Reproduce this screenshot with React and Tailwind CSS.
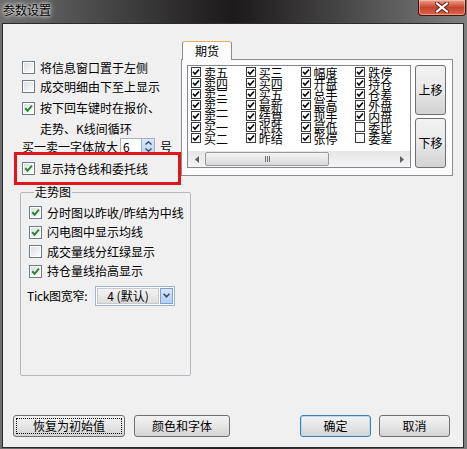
import React from 'react';

// ============================================
// 参数设置 - Win7 style settings dialog
// ============================================

const font = "font-['Noto_Sans_CJK_SC','Liberation_Sans',sans-serif]";

// Win7 themed checkbox (13px)
function Check({ checked }) {
  return (
    <span className="w-[13px] h-[13px] shrink-0 border border-[#6f7b88] bg-white p-[1px] flex">
      <span className="flex-1 flex items-center justify-center bg-gradient-to-br from-[#dcdfe3] to-[#fbfbfb]">
        {checked && (
          <svg width="9" height="9" viewBox="0 0 9 9">
            <path d="M1.2 4.3 L3.6 6.8 L7.9 1.6" stroke="#2a8a2a" strokeWidth="2" fill="none" />
          </svg>
        )}
      </span>
    </span>
  );
}

// Classic flat checkbox used inside the list
function ListCheck({ checked }) {
  return (
    <span className="w-[10px] h-[10px] shrink-0 border border-[#3a3a3a] bg-white flex items-center justify-center">
      {checked && (
        <svg width="8" height="8" viewBox="0 0 8 8">
          <path d="M1 3.8 L3 6 L7 1.5" stroke="#000" strokeWidth="1.7" fill="none" />
        </svg>
      )}
    </span>
  );
}

function Button({ children, className = '', focused = false, primary = false }) {
  return (
    <button
      className={`h-[22px] rounded-[3px] border ${
        primary ? 'border-[#3c7fb1] shadow-[inset_0_0_0_1px_#b6dcf5]' : 'border-[#707070]'
      } bg-gradient-to-b from-[#f2f2f2] via-[#e6e6e6] to-[#d4d4d4] text-[12px] leading-none text-black flex items-center justify-center p-[2px] ${className}`}
    >
      <span
        className={`w-full h-full flex items-center justify-center ${
          focused ? 'border border-dotted border-black' : ''
        }`}
      >
        {children}
      </span>
    </button>
  );
}

const columns = [
  [['卖五', 1], ['卖四', 1], ['卖三', 1], ['卖二', 1], ['卖一', 1], ['买一', 1], ['买二', 1]],
  [['买三', 1], ['买四', 1], ['买五', 1], ['最新', 1], ['结算', 1], ['张跌', 1], ['昨结', 1]],
  [['幅度', 1], ['开盘', 1], ['总手', 1], ['最高', 1], ['现手', 1], ['最低', 1], ['张停', 1]],
  [['跌停', 1], ['持仓', 1], ['仓差', 1], ['外盘', 1], ['内盘', 1], ['委比', 0], ['委差', 0]],
];

function TitleBar() {
  return (
    <div className="h-[23px] flex items-start justify-between shrink-0">
      <span className="pl-[3px] pt-[3px] text-[12px] leading-[13px] text-black [text-shadow:0_0_6px_#ffffff,0_0_3px_#ffffff]">
        参数设置
      </span>
      <button className="mr-[1px] w-[48px] h-[16px] rounded-b-[4px] border border-t-0 border-[#4a1208] bg-gradient-to-b from-[#e9a08c] via-[#c7412c] to-[#d9664a] shadow-[inset_0_0_0_1px_rgba(255,210,190,0.5)] flex items-center justify-center">
        <svg width="14" height="11" viewBox="0 0 14 11">
          <path d="M2 1.5 L12 9.5 M12 1.5 L2 9.5" stroke="#5a1a10" strokeWidth="4" strokeLinecap="square" />
          <path d="M2 1.5 L12 9.5 M12 1.5 L2 9.5" stroke="#ffffff" strokeWidth="2.2" strokeLinecap="square" />
        </svg>
      </button>
    </div>
  );
}

function LeftOptions() {
  return (
    <div className="w-[178px] shrink-0 flex flex-col pt-[37px]">
      <div className="flex items-center h-[13px] pl-[19px] gap-[5px]">
        <Check />
        <span className="leading-[13px] whitespace-nowrap">将信息窗口置于左侧</span>
      </div>
      <div className="flex items-center h-[13px] pl-[19px] gap-[5px] mt-[6px]">
        <Check />
        <span className="leading-[13px] whitespace-nowrap">成交明细由下至上显示</span>
      </div>
      <div className="flex items-start h-[41px] pl-[19px] gap-[5px] mt-[4px]">
        <span className="mt-[5px]">
          <Check checked />
        </span>
        <span className="leading-[21px] whitespace-nowrap">
          按下回车键时在报价、
          <br />
          走势、K线间循环
        </span>
      </div>
      <div className="flex items-center h-[17px] pl-[19px]">
        <span className="whitespace-nowrap">买一卖一字体放大</span>
        <div className="ml-[2px] w-[35px] h-[17px] border border-[#abadb3] bg-white flex">
          <span className="flex-1 pl-[2px] leading-[15px]">6</span>
          <div className="w-[13px] flex flex-col border-l border-[#8fb2dd] bg-gradient-to-b from-[#dbe8f7] to-[#bfd4ef]">
            <span className="flex-1 flex items-center justify-center">
              <svg width="7" height="4" viewBox="0 0 7 4">
                <path d="M0.5 3.5 L3.5 0.8 L6.5 3.5" stroke="#2b4d7e" strokeWidth="1.4" fill="none" />
              </svg>
            </span>
            <span className="flex-1 flex items-center justify-center">
              <svg width="7" height="4" viewBox="0 0 7 4">
                <path d="M0.5 0.5 L3.5 3.2 L6.5 0.5" stroke="#2b4d7e" strokeWidth="1.4" fill="none" />
              </svg>
            </span>
          </div>
        </div>
        <span className="ml-[5px]">号</span>
      </div>
      <div className="ml-[11px] mt-[-3px] w-[167px] h-[33px] border-[3px] border-[#e0161b] flex items-center pl-[5px] gap-[5px]">
        <Check checked />
        <span className="whitespace-nowrap">显示持仓线和委托线</span>
      </div>
    </div>
  );
}

function FuturesTab() {
  return (
    <div className="flex flex-col pt-[17px]">
      <div className="flex">
        <div className="ml-[1px] w-[50px] h-[19px] -mb-[1px] z-10 rounded-t-[3px] border border-b-0 border-[#898c95] border-t-[#e3b15e] bg-[#fcfcfc] flex items-center justify-center leading-none">
          期货
        </div>
      </div>
      <div className="w-[272px] h-[117px] border border-[#898c95] bg-[#fcfcfc] flex pl-[5px] pt-[5px]">
        <div className="w-[224px] h-[103px] border border-[#828790] bg-white flex flex-col">
          <div className="flex pt-[1px] pl-[3px]">
            {columns.map((col, ci) => (
              <div key={ci} className="w-[56px] flex flex-col">
                {col.map(([label, on]) => (
                  <div key={label} className="h-[11px] flex items-start gap-[3px]">
                    <ListCheck checked={!!on} />
                    <span className="text-[12px] leading-[11px] whitespace-nowrap">{label}</span>
                  </div>
                ))}
              </div>
            ))}
          </div>
          {/* horizontal scrollbar */}
          <div className="mt-auto h-[16px] flex bg-gradient-to-b from-[#e6e6e6] to-[#f4f4f4]">
            <span className="w-[17px] flex items-center justify-center">
              <svg width="4" height="7" viewBox="0 0 4 7">
                <path d="M4 0 L0 3.5 L4 7 Z" fill="#606060" />
              </svg>
            </span>
            <div className="w-[124px] my-[1px] rounded-[2px] border border-[#9a9a9a] bg-gradient-to-b from-[#f4f4f4] to-[#d9d9d9] flex items-center justify-center gap-[1px]">
              <span className="w-[1px] h-[6px] bg-[#707070]" />
              <span className="w-[1px] h-[6px] bg-[#707070]" />
              <span className="w-[1px] h-[6px] bg-[#707070]" />
            </div>
            <span className="flex-1" />
            <span className="w-[17px] flex items-center justify-center">
              <svg width="4" height="7" viewBox="0 0 4 7">
                <path d="M0 0 L4 3.5 L0 7 Z" fill="#606060" />
              </svg>
            </span>
          </div>
        </div>
        <div className="ml-[4px] flex flex-col gap-[3px]">
          <button className="w-[31px] h-[50px] rounded-[3px] border border-[#707070] bg-gradient-to-b from-[#f2f2f2] via-[#e8e8e8] to-[#d2d2d2] text-[12px] leading-none">
            上移
          </button>
          <button className="w-[31px] h-[50px] rounded-[3px] border border-[#707070] bg-gradient-to-b from-[#f2f2f2] via-[#e8e8e8] to-[#d2d2d2] text-[12px] leading-none">
            下移
          </button>
        </div>
      </div>
    </div>
  );
}

function TrendGroup() {
  const items = [
    ['分时图以昨收/昨结为中线', true],
    ['闪电图中显示均线', true],
    ['成交量线分红绿显示', false],
    ['持仓量线抬高显示', true],
  ];
  return (
    <fieldset className="ml-[17px] mt-[1px] w-[171px] h-[190px] border border-[#b5b9bd] rounded-[2px] pl-[8px]">
      <legend className="ml-[5px] px-[1px] leading-[12px]">走势图</legend>
      <div className="flex flex-col pt-[8px]">
        {items.map(([label, on], i) => (
          <div key={label} className={`flex items-center h-[13px] gap-[5px] ${i ? 'mt-[6.5px]' : ''}`}>
            <Check checked={on} />
            <span className="whitespace-nowrap">{label}</span>
          </div>
        ))}
        <div className="flex items-center mt-[8px] -ml-[2px]">
          <span className="w-[68px] whitespace-nowrap tracking-[-0.3px]">Tick图宽窄:</span>
          <div className="w-[80px] h-[20px] border border-[#9fb4d3] bg-white flex p-[1px]">
            <span className="flex-1 mr-[1px] border border-[#c9c9c9] bg-gradient-to-b from-[#f4f4f4] to-[#dddddd] flex items-center justify-center leading-none">
              4 (默认)
            </span>
            <span className="w-[13px] border border-[#7ba2d6] bg-gradient-to-b from-[#d7e5f6] to-[#b9d0ee] flex items-center justify-center">
              <svg width="7" height="5" viewBox="0 0 7 5">
                <path d="M0.6 0.8 L3.5 3.8 L6.4 0.8" stroke="#2b4d7e" strokeWidth="1.6" fill="none" />
              </svg>
            </span>
          </div>
        </div>
      </div>
    </fieldset>
  );
}

export default function App() {
  return (
    <div
      className={`w-[467px] h-[449px] flex flex-col overflow-hidden bg-gradient-to-r from-[#6f6f6f] via-[#1c1a1a] to-[#808080] ${font} text-[12px] text-black`}
    >
      <TitleBar />

      {/* Client area */}
      <div className="flex-1 ml-[2px] mr-[3px] mb-[1px] border border-[#2a2a2a] bg-[#f0f0f0] flex flex-col">
        <div className="flex">
          <LeftOptions />
          <FuturesTab />
        </div>

        <TrendGroup />

        <div className="flex-1" />

        {/* Bottom buttons */}
        <div className="flex items-center pl-[10px] pr-[13px] pb-[10px]">
          <Button className="w-[112px]" focused>
            恢复为初始值
          </Button>
          <Button className="w-[96px] ml-[9px]">颜色和字体</Button>
          <div className="flex-1" />
          <Button className="w-[71px]" primary>
            确定
          </Button>
          <Button className="w-[71px] ml-[8px]">取消</Button>
        </div>
      </div>
    </div>
  );
}
